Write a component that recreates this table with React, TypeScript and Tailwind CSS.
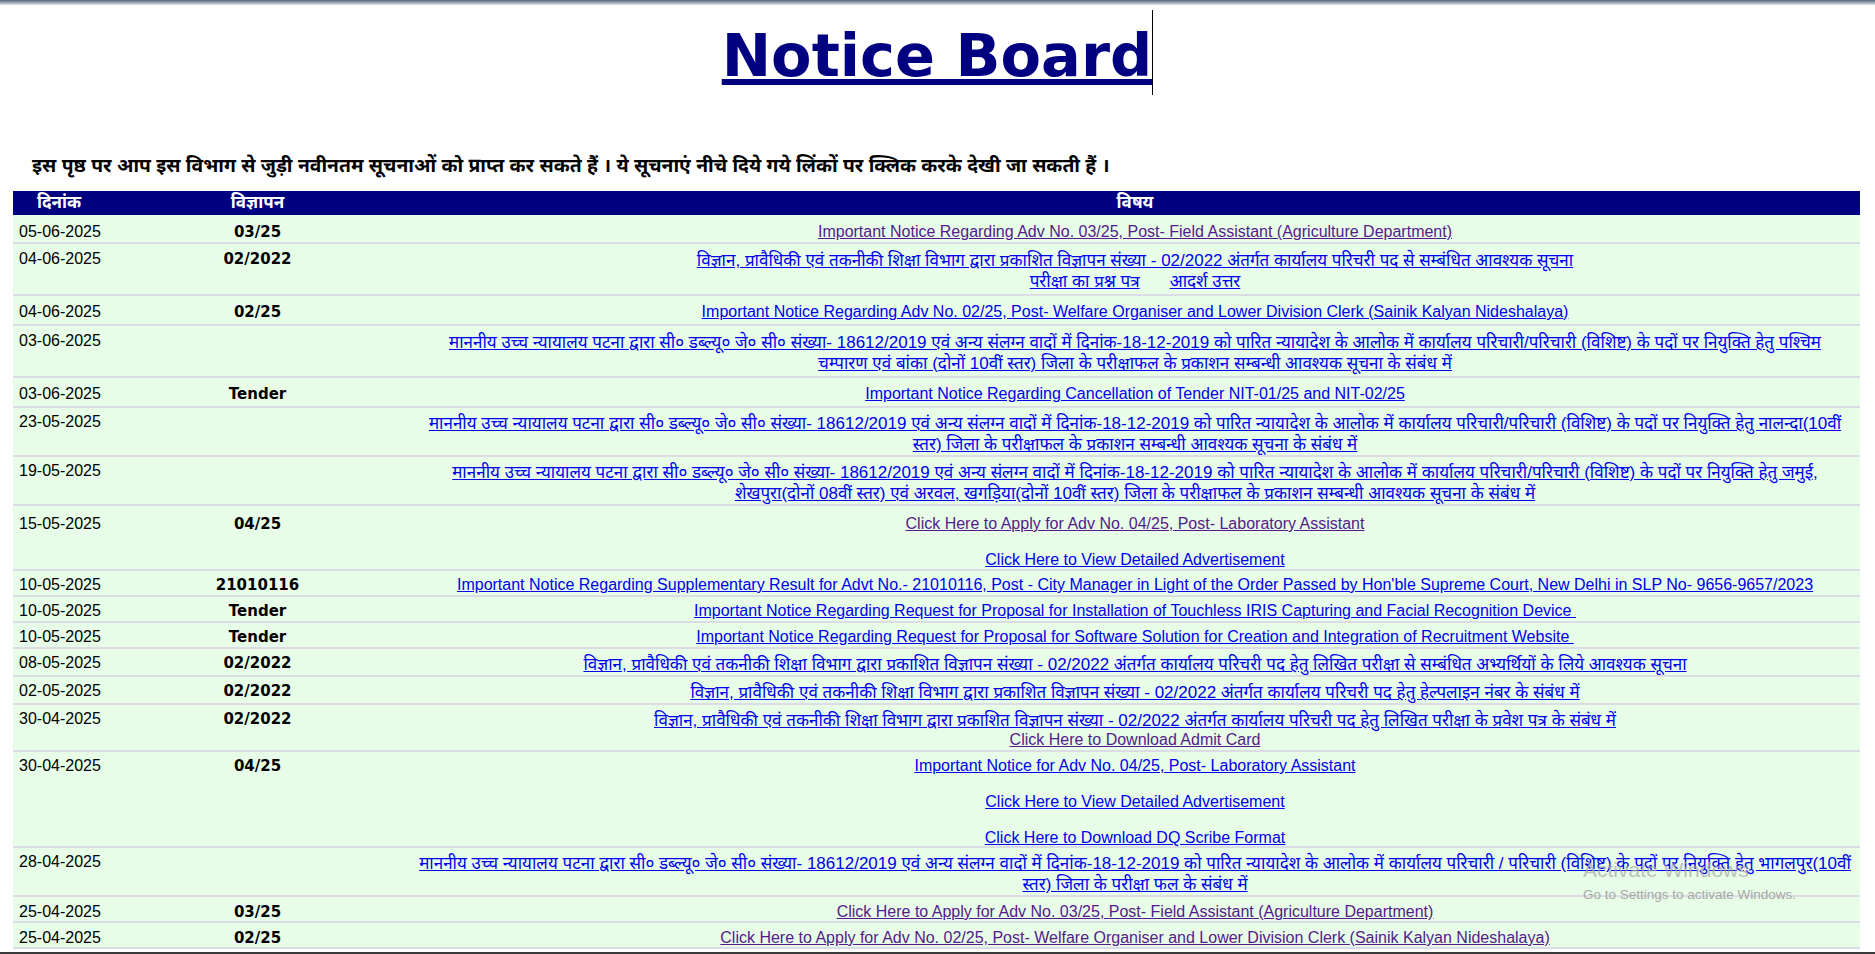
import React from "react";

const FONT = { fontFamily: '"Liberation Sans", "Noto Sans", "Noto Sans Devanagari", "Lohit Devanagari", sans-serif' };

type Ln = { t: string; v?: boolean; hi?: boolean } | "blank" | "pair";

type Row = { d: string; a: string; h: string; pt: string; lines: Ln[] };

const M1 =
  "माननीय उच्च न्यायालय पटना द्वारा सी० डब्ल्यू० जे० सी० संख्या- 18612/2019 एवं अन्य संलग्न वादों में दिनांक-18-12-2019 को पारित न्यायादेश के आलोक में कार्यालय परिचारी/परिचारी (विशिष्ट) के पदों पर नियुक्ति हेतु ";
const VP = "विज्ञान, प्रावैधिकी एवं तकनीकी शिक्षा विभाग द्वारा प्रकाशित विज्ञापन संख्या - 02/2022 अंतर्गत कार्यालय परिचरी पद ";

const rows: Row[] = [
  { d: "05-06-2025", a: "03/25", h: "h-[29px]", pt: "pt-[8px]", lines: [{ t: "Important Notice Regarding Adv No. 03/25, Post- Field Assistant (Agriculture Department)", v: true }] },
  { d: "04-06-2025", a: "02/2022", h: "h-[52px]", pt: "pt-[6px]", lines: [{ t: VP + "से सम्बंधित आवश्यक सूचना", hi: true }, "pair"] },
  { d: "04-06-2025", a: "02/25", h: "h-[30px]", pt: "pt-[7px]", lines: [{ t: "Important Notice Regarding Adv No. 02/25, Post- Welfare Organiser and Lower Division Clerk (Sainik Kalyan Nideshalaya)" }] },
  { d: "03-06-2025", a: "", h: "h-[52px]", pt: "pt-[6px]", lines: [{ t: M1 + "पश्चिम", hi: true }, { t: "चम्पारण एवं बांका (दोनों 10वीं स्तर) जिला के परीक्षाफल के प्रकाशन सम्बन्धी आवश्यक सूचना के संबंध में", hi: true }] },
  { d: "03-06-2025", a: "Tender", h: "h-[30px]", pt: "pt-[7px]", lines: [{ t: "Important Notice Regarding Cancellation of Tender NIT-01/25 and NIT-02/25" }] },
  { d: "23-05-2025", a: "", h: "h-[49px]", pt: "pt-[5px]", lines: [{ t: M1 + "नालन्दा(10वीं", hi: true }, { t: "स्तर) जिला के परीक्षाफल के प्रकाशन सम्बन्धी आवश्यक सूचना के संबंध में", hi: true }] },
  { d: "19-05-2025", a: "", h: "h-[49px]", pt: "pt-[5px]", lines: [{ t: M1 + "जमुई,", hi: true }, { t: "शेखपुरा(दोनों 08वीं स्तर) एवं अरवल, खगड़िया(दोनों 10वीं स्तर) जिला के परीक्षाफल के प्रकाशन सम्बन्धी आवश्यक सूचना के संबंध में", hi: true }] },
  { d: "15-05-2025", a: "04/25", h: "h-[65px]", pt: "pt-[9px]", lines: [{ t: "Click Here to Apply for Adv No. 04/25, Post- Laboratory Assistant", v: true }, "blank", { t: "Click Here to View Detailed Advertisement" }] },
  { d: "10-05-2025", a: "21010116", h: "h-[26px]", pt: "pt-[5px]", lines: [{ t: "Important Notice Regarding Supplementary Result for Advt No.- 21010116, Post - City Manager in Light of the Order Passed by Hon'ble Supreme Court, New Delhi in SLP No- 9656-9657/2023" }] },
  { d: "10-05-2025", a: "Tender", h: "h-[26px]", pt: "pt-[5px]", lines: [{ t: "Important Notice Regarding Request for Proposal for Installation of Touchless IRIS Capturing and Facial Recognition Device\u00a0" }] },
  { d: "10-05-2025", a: "Tender", h: "h-[26px]", pt: "pt-[5px]", lines: [{ t: "Important Notice Regarding Request for Proposal for Software Solution for Creation and Integration of Recruitment Website\u00a0" }] },
  { d: "08-05-2025", a: "02/2022", h: "h-[28px]", pt: "pt-[5px]", lines: [{ t: VP + "हेतु लिखित परीक्षा से सम्बंधित अभ्यर्थियों के लिये आवश्यक सूचना", hi: true }] },
  { d: "02-05-2025", a: "02/2022", h: "h-[28px]", pt: "pt-[5px]", lines: [{ t: VP + "हेतु हेल्पलाइन नंबर के संबंध में", hi: true }] },
  { d: "30-04-2025", a: "02/2022", h: "h-[47px]", pt: "pt-[5px]", lines: [{ t: VP + "हेतु लिखित परीक्षा के प्रवेश पत्र के संबंध में", hi: true }, { t: "Click Here to Download Admit Card", v: true }] },
  { d: "30-04-2025", a: "04/25", h: "h-[96px]", pt: "pt-[5px]", lines: [{ t: "Important Notice for Adv No. 04/25, Post- Laboratory Assistant" }, "blank", { t: "Click Here to View Detailed Advertisement" }, "blank", { t: "Click Here to Download DQ Scribe Format" }] },
  { d: "28-04-2025", a: "", h: "h-[49px]", pt: "pt-[5px]", lines: [{ t: "माननीय उच्च न्यायालय पटना द्वारा सी० डब्ल्यू० जे० सी० संख्या- 18612/2019 एवं अन्य संलग्न वादों में दिनांक-18-12-2019 को पारित न्यायादेश के आलोक में कार्यालय परिचारी / परिचारी (विशिष्ट) के पदों पर नियुक्ति हेतु भागलपुर(10वीं", hi: true }, { t: "स्तर) जिला के परीक्षा फल के संबंध में", hi: true }] },
  { d: "25-04-2025", a: "03/25", h: "h-[26px]", pt: "pt-[6px]", lines: [{ t: "Click Here to Apply for Adv No. 03/25, Post- Field Assistant (Agriculture Department)", v: true }] },
  { d: "25-04-2025", a: "02/25", h: "h-[26px]", pt: "pt-[6px]", lines: [{ t: "Click Here to Apply for Adv No. 02/25, Post- Welfare Organiser and Lower Division Clerk (Sainik Kalyan Nideshalaya)", v: true }] },
];

function Line({ ln }: { ln: Ln }) {
  if (ln === "blank") return <div className="h-[18px]" />;
  if (ln === "pair")
    return (
      <div className="leading-[21px] text-[17px] whitespace-nowrap">
        <a href="#" className="text-[#0000ee] underline">परीक्षा का प्रश्न पत्र</a>
        <span className="inline-block w-[30px]" />
        <a href="#" className="text-[#0000ee] underline">आदर्श उत्तर</a>
      </div>
    );
  return (
    <div className={(ln.hi ? "leading-[21px] text-[17px]" : "leading-[18px]") + " whitespace-nowrap"}>
      <a href="#" className={(ln.v ? "text-[#551a8b]" : "text-[#0000ee]") + " underline"}>
        {ln.t}
      </a>
    </div>
  );
}

export default function App() {
  return (
    <div className="relative min-h-screen bg-white text-black text-[16px]" style={FONT}>
      <div className="h-[5px] bg-gradient-to-b from-[#55657d] to-[#dfe6ee]" />
      <div className="mt-[5px] flex justify-center">
        <div className="h-[85px] border-r border-black">
          <div
            className="pt-[16px] text-[59px] leading-none font-bold text-[#000080] underline decoration-[6px] underline-offset-[3px]"
            style={{ fontFamily: '"DejaVu Sans", Verdana, sans-serif' }}
          >
            Notice Board
          </div>
        </div>
      </div>
      <div className="mt-[58px] pl-[32px] h-[26px] leading-[26px] text-[19.3px] font-bold whitespace-nowrap">
        इस पृष्ठ पर आप इस विभाग से जुड़ी नवीनतम सूचनाओं को प्राप्त कर सकते हैं । ये सूचनाएं नीचे दिये गये लिंकों पर क्लिक करके देखी जा सकती हैं ।
      </div>
      <div className="mt-[12px] ml-[13px] mr-[15px]">
        <div className="grid grid-cols-[92px_305px_1fr] h-[24px] bg-[#000080] text-white font-bold text-[17px] leading-[24px] text-center">
          <div>दिनांक</div>
          <div>विज्ञापन</div>
          <div>विषय</div>
        </div>
        {rows.map((r, i) => (
          <div
            key={i}
            className={"grid grid-cols-[92px_305px_1fr] bg-[#e7fde7] border-b-2 border-[#dcdce6] overflow-hidden " + r.h}
          >
            <div className={"pl-[6px] leading-[18px] " + r.pt}>{r.d}</div>
            <div
              className={"leading-[18px] text-center font-bold text-[15px] " + r.pt}
              style={{ fontFamily: '"DejaVu Sans", Verdana, sans-serif' }}
            >
              {r.a}
            </div>
            <div className={"text-center " + r.pt}>
              {r.lines.map((ln, j) => (
                <Line key={j} ln={ln} />
              ))}
            </div>
          </div>
        ))}
      </div>
      <div className="absolute left-[1583px] top-[858px] pointer-events-none text-[#a8a8a8]">
        <div className="text-[21px] leading-[24px] opacity-70">Activate Windows</div>
        <div className="text-[13.5px] leading-[18px] mt-[4px]">Go to Settings to activate Windows.</div>
      </div>
      <div className="fixed left-0 right-0 bottom-0 h-[2px] bg-[#3a3a3a]" />
    </div>
  );
}
